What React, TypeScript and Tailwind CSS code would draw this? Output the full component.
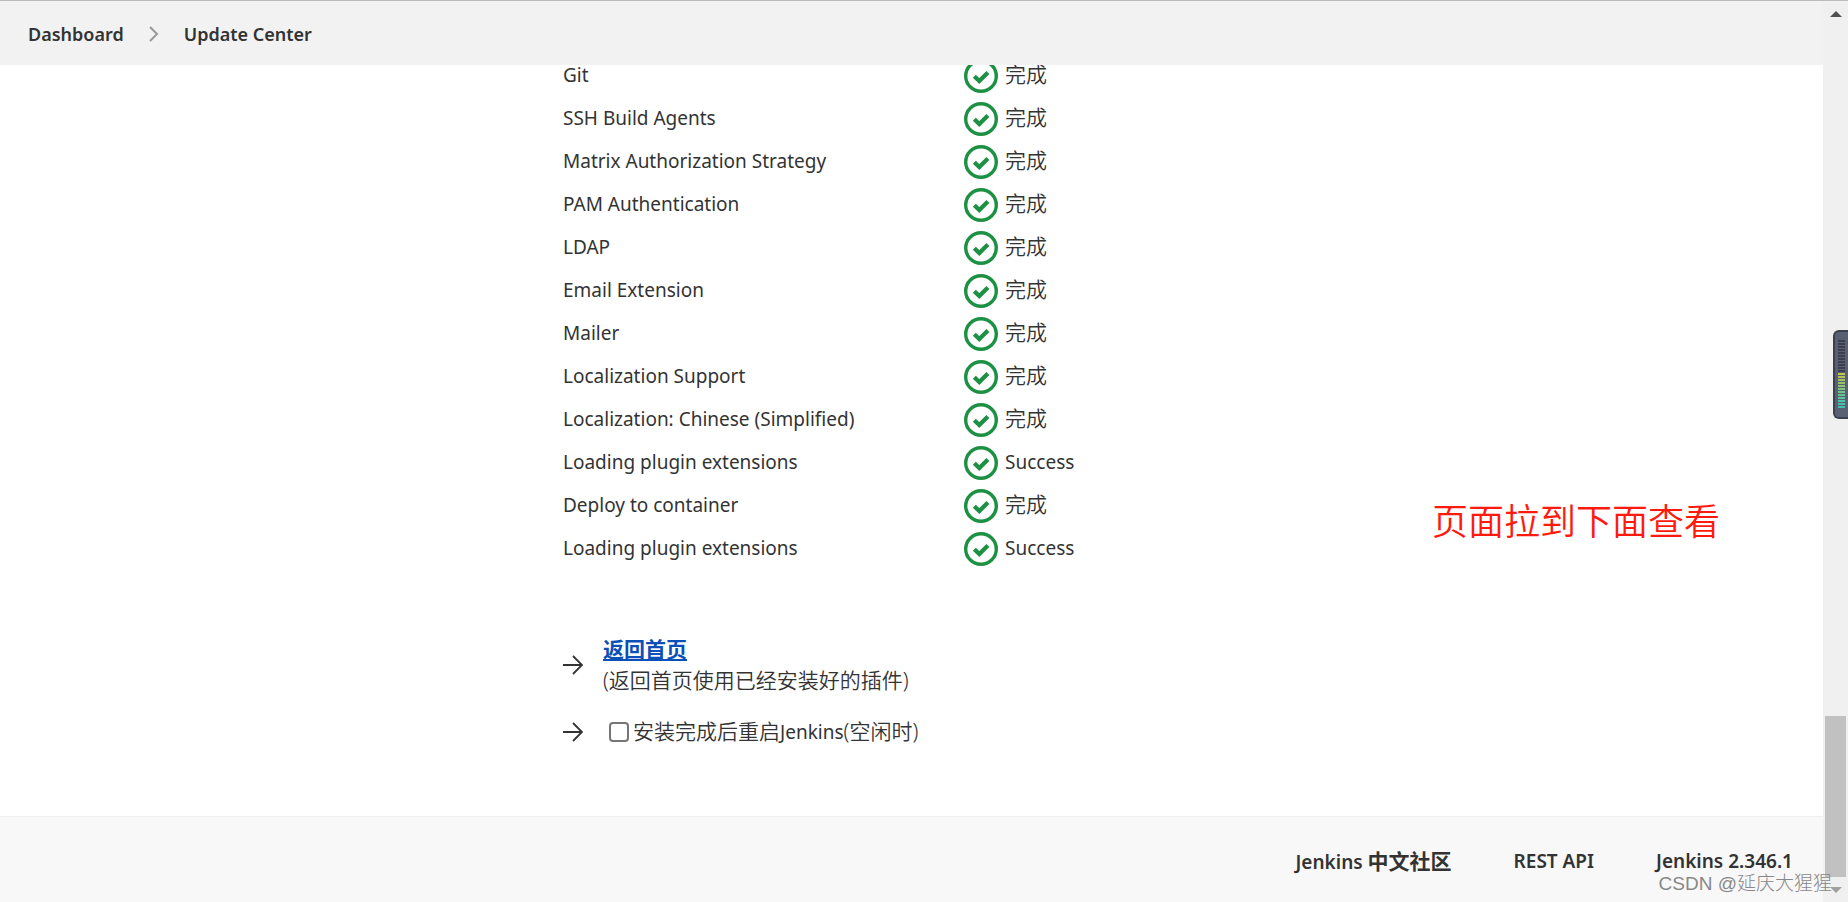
import { clsx } from 'clsx';

const plugins = [
  { name: 'Git', status: '完成' },
  { name: 'SSH Build Agents', status: '完成' },
  { name: 'Matrix Authorization Strategy', status: '完成' },
  { name: 'PAM Authentication', status: '完成' },
  { name: 'LDAP', status: '完成' },
  { name: 'Email Extension', status: '完成' },
  { name: 'Mailer', status: '完成' },
  { name: 'Localization Support', status: '完成' },
  { name: 'Localization: Chinese (Simplified)', status: '完成' },
  { name: 'Loading plugin extensions', status: 'Success' },
  { name: 'Deploy to container', status: '完成' },
  { name: 'Loading plugin extensions', status: 'Success' },
];

const meterBars = [
  '#3b3f4c', '#3b3f4c', '#3b3f4c', '#3b3f4c', '#3b3f4c', '#3b3f4c', '#3b3f4c', '#3b3f4c',
  '#3b3f4c', '#3b3f4c', '#3b3f4c', '#c3c44e', '#b5c255', '#a6c45e', '#97c468', '#8ac673',
  '#7dc67e', '#70c68a', '#64c696', '#5ac4a0', '#50c2a8', '#48c0ae', '#42bfb2',
];

function CheckCircle() {
  return (
    <svg viewBox="0 0 34 34" className="size-[34px] shrink-0" fill="none" stroke="#1c9143" aria-hidden="true">
      <circle cx="17" cy="17" r="15.3" strokeWidth="3.4" />
      <path d="M10.3 17.2l5 4.9 8.6-8.6" strokeWidth="4.2" />
    </svg>
  );
}

function ArrowRight() {
  return (
    <svg viewBox="0 0 20 20" className="size-5 shrink-0" fill="none" stroke="#333" strokeWidth="1.8" aria-hidden="true">
      <path d="M0 10h19M10 1l9 9-9 9" />
    </svg>
  );
}

function Breadcrumbs() {
  return (
    <header className="relative z-10 flex h-[65px] shrink-0 items-center gap-6 border-t border-[#bbb] bg-[#f2f2f2] pt-0.5 pl-7 text-[18px] font-semibold">
      <a href="#dashboard">Dashboard</a>
      <svg viewBox="0 0 12 16" className="h-4 w-3" fill="none" stroke="#999" strokeWidth="2" aria-hidden="true">
        <path d="M2 1l7 7-7 7" />
      </svg>
      <a href="#update-center">Update Center</a>
    </header>
  );
}

function PluginTable() {
  return (
    <table className="w-full table-fixed leading-5">
      <tbody>
        {plugins.map((plugin, i) => (
          <tr key={i} className="h-[43px]">
            <td className="w-[401px] p-0 pb-0.5">{plugin.name}</td>
            <td className="p-0">
              <div className="flex items-center gap-[7px]">
                <CheckCircle />
                <span className={clsx(plugin.status === '完成' ? 'pb-1 text-[21px] font-[350]' : 'pb-0.5')}>{plugin.status}</span>
              </div>
            </td>
          </tr>
        ))}
      </tbody>
    </table>
  );
}

function Footer() {
  return (
    <footer className="flex h-[86px] shrink-0 items-center justify-end gap-[62px] border-t border-[#eee] bg-[#f8f8f8] pt-1 pr-[30px] font-semibold">
      <a href="#community">
        Jenkins <span className="text-[21px] font-bold">中文社区</span>
      </a>
      <a href="#api">REST API</a>
      <a href="#version">Jenkins 2.346.1</a>
    </footer>
  );
}

function Scrollbar() {
  return (
    <div className="flex w-[25px] shrink-0 flex-col items-center border-t border-[#bbb] bg-[#f0f0f0]" aria-hidden="true">
      <svg viewBox="0 0 12 6" className="mt-2.5 h-1.5 w-3" fill="#505050">
        <path d="M6 0l6 6H0z" />
      </svg>
      <div className="flex-1" />
      <div className="h-[161px] w-[21px] bg-[#c1c1c1]" />
      <svg viewBox="0 0 12 6" className="mt-2.5 mb-[9px] h-1.5 w-3" fill="#a0a0a0">
        <path d="M6 6L0 0h12z" />
      </svg>
    </div>
  );
}

function LevelMeter() {
  return (
    <div className="absolute top-[330px] right-0 flex h-[89px] w-[15px] flex-col items-center gap-px rounded-l-md border-2 border-r-0 border-[#3c404d] bg-[#596072] pt-2" aria-hidden="true">
      {meterBars.map((color, i) => (
        <div key={i} className="h-0.5 w-[7px]" style={{ backgroundColor: color }} />
      ))}
    </div>
  );
}

export default function App() {
  return (
    <div className="relative flex h-screen overflow-hidden bg-white font-['Noto_Sans','Noto_Sans_CJK_SC',sans-serif] text-[19px] leading-[31px] text-[#333]">
      <div className="flex min-w-0 flex-1 flex-col">
        <Breadcrumbs />
        <main className="flex min-h-0 flex-1 flex-col justify-end pb-[68px] pl-[563px]">
          <PluginTable />
          <div className="mt-16 flex items-center gap-5 text-[21px]">
            <ArrowRight />
            <div>
              <a href="#home" className="font-bold text-[#0b4fb8] underline">返回首页</a>
              <p className="font-[350]">(返回首页使用已经安装好的插件)</p>
            </div>
          </div>
          <div className="mt-5 flex items-center gap-[26px] text-[21px]">
            <ArrowRight />
            <label className="flex items-center gap-1">
              <input type="checkbox" className="size-5 appearance-none rounded border-2 border-[#767676] bg-white" />
              <span className="font-[350]">
                安装完成后重启<span className="text-[19px] font-normal">Jenkins</span>(空闲时)
              </span>
            </label>
          </div>
        </main>
        <Footer />
      </div>
      <Scrollbar />

      <p className="absolute top-[502px] right-32 text-4xl font-[350] text-[#ff1a0d]">页面拉到下面查看</p>
      <LevelMeter />
      <p className="absolute right-4 bottom-2 font-['Liberation_Sans','Noto_Sans_CJK_SC',sans-serif] text-[19px] leading-5 font-light text-[#888]">
        CSDN @延庆大猩猩
      </p>
    </div>
  );
}
